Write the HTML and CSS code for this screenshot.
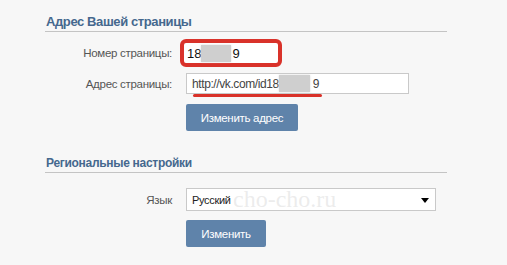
FILE: index.html
```html
<!DOCTYPE html>
<html lang="ru">
<head>
	<meta charset="UTF-8">
	<title>Настройки</title>
	<link rel="stylesheet" href="styles.css">
</head>
<body>
	<div class="page">
		<h2 class="section-title">Адрес Вашей страницы</h2>

		<div class="row row-number">
			<span class="label">Номер страницы:</span>
			<div class="marked">
				<span>18</span><span class="blur blur-one"></span><span>9</span>
			</div>
		</div>

		<div class="row row-address">
			<span class="label">Адрес страницы:</span>
			<div class="field">
				<span>http://vk.com/id18</span><span class="blur blur-two"></span><span>9</span>
				<span class="underline"></span>
			</div>
		</div>

		<div class="row">
			<span></span>
			<a class="button button-wide">Изменить адрес</a>
		</div>

		<h2 class="section-title second">Региональные настройки</h2>

		<div class="row row-lang">
			<span class="label">Язык</span>
			<div class="field select">
				<span>Русский</span>
				<span class="arrow"></span>
				<span class="watermark">cho-cho.ru</span>
			</div>
		</div>

		<div class="row">
			<span></span>
			<a class="button button-small">Изменить</a>
		</div>
	</div>
</body>
</html>
```

FILE: styles.css
```css
body {
	margin: 0;
	background: #f7f7f7;
	font-family: "Liberation Sans", Arial, sans-serif;
	font-size: 12px;
	color: #222;
}

.page {
	width: 402px;
	padding: 12px 0 0 45px;
}

.section-title {
	margin: 0;
	height: 19px;
	line-height: 19px;
	font-size: 13px;
	letter-spacing: -0.4px;
	font-weight: bold;
	color: #45688e;
	padding-left: 1px;
	border-bottom: 1px solid #c4c4c4;
}

.section-title.second {
	margin-top: 22px;
	font-size: 12px;
	letter-spacing: -0.3px;
	line-height: 21px;
}

.row {
	display: grid;
	grid-template-columns: 127px 1fr;
	column-gap: 14px;
	align-items: center;
}

.label {
	text-align: right;
	color: #555;
	font-size: 11.5px;
	letter-spacing: -0.3px;
}

.row-number { margin-top: 7px; }
.row-address { margin-top: 6px; }
.row-lang { margin-top: 15px; }

.marked {
	margin-left: -6px;
	width: 91px;
	height: 20px;
	border: 4px solid #d9322a;
	border-radius: 6px;
	background: #fff;
	padding-left: 3px;
	display: flex;
	align-items: center;
	font-size: 13px;
	color: #111;
}

.blur {
	display: inline-block;
	background: #cfcfcf;
	box-shadow: 0 0 2px #d8d8d8;
}
.blur-one { width: 30px; height: 17px; margin: 0 1px 0 0; }
.blur-two { width: 31px; height: 17px; margin: 0 3px 0 0; }

.field {
	position: relative;
	box-sizing: border-box;
	width: 223px;
	height: 21px;
	border: 1px solid #c9c9c9;
	background: #fff;
	padding-left: 5px;
	display: flex;
	align-items: center;
	font-size: 12px;
	letter-spacing: -0.4px;
	color: #444;
}

.underline {
	position: absolute;
	left: 6px;
	top: 20px;
	width: 129px;
	height: 3px;
	border-radius: 2px;
	background: #d9322a;
}

.button {
	display: flex;
	align-items: center;
	justify-content: center;
	height: 27px;
	margin-top: 10px;
	background: #5f83aa;
	border-radius: 2px;
	color: #fff;
	font-size: 11.5px;
	letter-spacing: -0.3px;
	cursor: pointer;
}
.button-wide { width: 112px; }
.button-small { width: 80px; margin-top: 9px; }

.select {
	width: 250px;
	height: 23px;
	font-size: 11px;
	letter-spacing: -0.3px;
	color: #222;
}

.arrow {
	position: absolute;
	right: 6px;
	top: 9px;
	border-left: 4px solid transparent;
	border-right: 4px solid transparent;
	border-top: 5px solid #000;
}

.watermark {
	position: absolute;
	left: 46px;
	top: -3px;
	font-family: "Liberation Serif", serif;
	font-size: 24px;
	letter-spacing: 0;
	color: rgba(200, 200, 200, 0.35);
	pointer-events: none;
}
```
